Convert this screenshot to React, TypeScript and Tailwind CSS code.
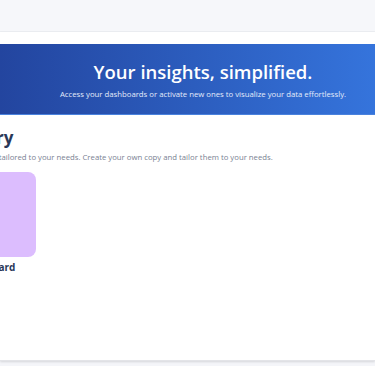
import React from 'react';

const App: React.FC = () => {
  return (
    <div
      className="h-[366px] w-[375px] overflow-hidden bg-[#f4f5f9] flex flex-col"
      style={{ fontFamily: '"Open Sans", "Noto Sans", sans-serif' }}
    >
      <header className="h-[32px] shrink-0 bg-[#f6f7fa] border-b border-[#eceef2]" />

      <main className="h-[329px] shrink-0 bg-white pt-3 shadow-[0_1px_2px_rgba(0,0,0,0.12)] border-b border-[#e3e4e8]">
        <section className="h-[71px] bg-gradient-to-r from-[#23459f] to-[#3574dc] border-b border-[#4a82dd] flex flex-col justify-center items-center pl-[31px] text-center text-white">
          <h1 className="text-[18.5px] font-semibold leading-[26px] whitespace-nowrap">Your insights, simplified.</h1>
          <p className="text-[7.75px] leading-[12px] mt-[3px] text-[#e4ebfa] whitespace-nowrap">
            Access your dashboards or activate new ones to visualize your data effortlessly.
          </p>
        </section>

        <div className="-ml-[47px] mt-[11px] flex flex-col">
          <h2 className="text-[17px] font-bold leading-[24px] text-[#2a3858] whitespace-nowrap">Gallery</h2>
          <p className="text-[7.75px] leading-[12px] mt-[1px] text-[#7a8293] whitespace-nowrap">
            Dashboards tailored to your needs. Create your own copy and tailor them to your needs.
          </p>
          <div className="mt-[9px] flex flex-col w-[83px]">
            <div className="h-[85px] w-[83px] rounded-[8px] bg-[#dcbdfe]" />
            <span className="mt-[3px] pl-[8px] text-[10px] font-bold leading-[14px] text-[#2a3858] whitespace-nowrap">Dashboard</span>
          </div>
        </div>
      </main>
    </div>
  );
};

export default App;
